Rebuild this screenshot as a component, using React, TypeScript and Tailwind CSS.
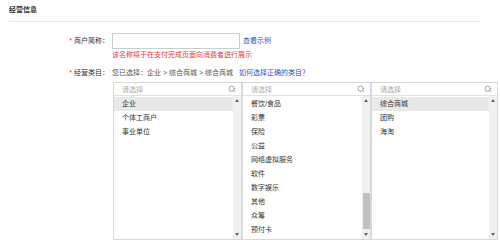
import { Search } from "lucide-react";

type Col = {
  items: string[];
  active?: number;
  width: string;
  thumb?: boolean;
};

const cols: Col[] = [
  { items: ["企业", "个体工商户", "事业单位"], active: 0, width: "w-[129px]" },
  {
    items: ["餐饮/食品", "彩票", "保险", "公益", "网络虚拟服务", "软件", "数字娱乐", "其他", "众筹", "预付卡"],
    width: "w-[129px]",
    thumb: true,
  },
  { items: ["综合商城", "团购", "海淘"], active: 0, width: "w-[127px]" },
];

function Scrollbar({ thumb }: { thumb?: boolean }) {
  return (
    <div className="flex w-[8px] flex-col items-center bg-[#f1f1f1]">
      <div className="flex h-[9px] items-center">
        <span className="h-0 w-0 border-x-[2px] border-b-[3px] border-x-transparent border-b-[#666]" />
      </div>
      <div className="flex-1" />
      {thumb && <div className="mb-[1px] h-[36px] w-[7px] bg-[#c1c1c1]" />}
      <div className="flex h-[9px] items-center">
        <span className="h-0 w-0 border-x-[2px] border-t-[3px] border-x-transparent border-t-[#666]" />
      </div>
    </div>
  );
}

function Picker({ col }: { col: Col }) {
  return (
    <div className={`${col.width} flex h-[158px] flex-col border border-[#d9d9d9] bg-white`}>
      <div className="flex h-[13px] items-center justify-between border-b border-[#e3e3e3] pl-[8px] pr-[5px]">
        <span className="text-[7px] leading-[13px] text-[#aaa]">请选择</span>
        <Search size={8} strokeWidth={2} className="text-[#777]" />
      </div>
      <div className="flex min-h-0 flex-1">
        <div className="flex-1 pt-[1px]">
          {col.items.map((it, i) => (
            <div
              key={it}
              className={`h-[14px] pl-[8px] text-[7px] leading-[14px] text-[#333] ${
                i === col.active ? "bg-[#e9e9e9]" : ""
              }`}
            >
              {it}
            </div>
          ))}
        </div>
        <Scrollbar thumb={col.thumb} />
      </div>
    </div>
  );
}

export default function App() {
  return (
    <div className="h-[240px] w-[500px] overflow-hidden bg-white font-['Liberation_Sans','Noto_Sans_CJK_SC',sans-serif] text-[7px] leading-[14px] text-[#333]">
      <div className="ml-[9px] w-[471px] border-b border-[#e6e6e6] pt-[3px] pb-[4px] text-[7px] leading-[14px]">
        <span className="font-bold text-[#333]">经营信息</span>
      </div>

      <div className="mt-[11px] flex h-[16px] items-center">
        <div className="w-[109px] text-right leading-[16px]">
          <span className="mr-[2px] text-[#e4393c]">*</span>
          商户简称：
        </div>
        <input className="ml-[3px] h-[16px] w-[128px] border border-[#ccc] bg-white outline-none" />
        <a className="ml-[3px] text-[#2b55c8]">查看示例</a>
      </div>
      <div className="ml-[112px] leading-[12px] text-[#e4393c]">该名称将于在支付完成页面向消费者进行展示</div>

      <div className="mt-[5px] flex h-[14px] items-center">
        <div className="w-[109px] text-right">
          <span className="mr-[2px] text-[#e4393c]">*</span>
          经营类目：
        </div>
        <span className="ml-[3px] text-[#555]">您已选择：企业 &gt; 综合商城 &gt; 综合商城</span>
        <a className="ml-[6px] text-[#2b55c8]">如何选择正确的类目？</a>
      </div>

      <div className="ml-[113px] mt-[2px] flex">
        {cols.map((c, i) => (
          <Picker key={i} col={c} />
        ))}
      </div>
    </div>
  );
}
